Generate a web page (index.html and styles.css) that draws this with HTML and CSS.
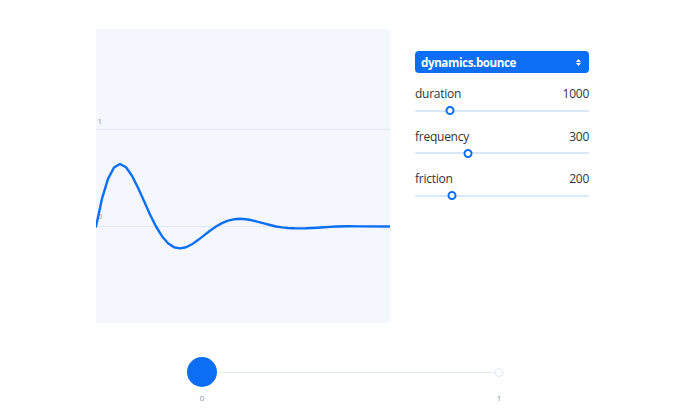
FILE: index.html
```html
<!DOCTYPE html>
<html>
<head>
<meta charset="utf-8">
<link rel="stylesheet" href="styles.css">
</head>
<body>
<div class="stage">
  <div class="main">
    <div class="chart">
      <svg class="plot" width="294" height="294" viewBox="0 0 294 294">
        <line x1="0" y1="100.5" x2="294" y2="100.5" class="grid"/>
        <line x1="0" y1="197.5" x2="294" y2="197.5" class="grid"/>
        <text x="1.5" y="94.5" class="axis">1</text>
        <text x="1.5" y="190" class="axis">0</text>
        <polyline class="curve" points="0,197.5 6,169.7 12,149.9 18,138.5 24,135.0 30,138.3 36,146.8 42,158.7 48,172.1 54,185.5 60,197.5 66,207.2 72,214.2 78,218.2 84,219.4 90,218.2 96,215.2 102,211.1 108,206.4 114,201.7 120,197.5 126,194.1 132,191.7 138,190.3 144,189.8 150,190.3 156,191.3 162,192.8 168,194.4 174,196.0 180,197.5 186,198.4 192,199.0 198,199.3 204,199.4 210,199.3 216,199.0 222,198.7 228,198.3 234,197.9 240,197.5 252,197.3 264,197.4 294,197.5"/>
      </svg>
    </div>
    <div class="panel">
      <div class="select">
        <span class="select-text">dynamics.bounce</span>
        <svg class="select-arrows" width="5" height="7" viewBox="0 0 5 7">
          <polygon points="0,3 2.5,0 5,3" fill="#fff"/>
          <polygon points="0,4 2.5,7 5,4" fill="#fff"/>
        </svg>
      </div>
      <div class="controls">
        <div class="control">
          <div class="control-head"><span>duration</span><span>1000</span></div>
          <div class="slider"><div class="track"></div><div class="thumb" style="left: 20.1%"></div></div>
        </div>
        <div class="control">
          <div class="control-head"><span>frequency</span><span>300</span></div>
          <div class="slider"><div class="track"></div><div class="thumb" style="left: 30.6%"></div></div>
        </div>
        <div class="control">
          <div class="control-head"><span>friction</span><span>200</span></div>
          <div class="slider"><div class="track"></div><div class="thumb" style="left: 21.4%"></div></div>
        </div>
      </div>
    </div>
  </div>
  <div class="timeline">
    <div class="tl-bar">
      <div class="tl-line"></div>
      <div class="tl-knob"></div>
      <div class="tl-end"></div>
    </div>
    <div class="tl-labels"><span class="tl-label">0</span><span class="tl-label">1</span></div>
  </div>
</div>
</body>
</html>
```

FILE: styles.css
```css
html, body {
  margin: 0;
  padding: 0;
  background: #ffffff;
}
body {
  font-family: "Open Sans", "Noto Sans", sans-serif;
  color: #2f343c;
}
.stage {
  width: 700px;
  height: 420px;
  padding-top: 29px;
  box-sizing: border-box;
}
.main {
  display: flex;
  align-items: flex-start;
  gap: 25px;
  padding-left: 96px;
}
.chart {
  width: 294px;
  height: 294px;
  background: #f4f8fe;
  flex: none;
}
.plot {
  display: block;
}
.grid {
  stroke: #dfe9f6;
  stroke-width: 1;
}
.axis {
  font-family: "Open Sans", sans-serif;
  font-size: 8px;
  fill: #8a94a3;
}
.curve {
  fill: none;
  stroke: #0b6ef5;
  stroke-width: 2.4;
  stroke-linejoin: round;
  stroke-linecap: round;
}
.panel {
  width: 174px;
  padding-top: 22px;
  flex: none;
}
.select {
  height: 22px;
  background: #0b6ef5;
  border-radius: 4px;
  display: flex;
  align-items: center;
  justify-content: space-between;
  padding: 0 8px 0 6px;
}
.select-text {
  color: #ffffff;
  font-weight: 700;
  font-size: 11.6px;
  letter-spacing: -0.4px;
}
.select-arrows {
  display: block;
}
.controls {
  margin-top: 13px;
  display: flex;
  flex-direction: column;
  gap: 8.5px;
}
.control-head {
  display: flex;
  justify-content: space-between;
  font-size: 12px;
  letter-spacing: -0.25px;
  line-height: 16px;
}
.slider {
  position: relative;
  height: 18px;
}
.track {
  position: absolute;
  left: 0;
  right: 0;
  top: 7.5px;
  height: 2px;
  background: #d9e7fa;
  border-radius: 1px;
}
.thumb {
  position: absolute;
  top: 4px;
  width: 9px;
  height: 9px;
  box-sizing: border-box;
  border: 2px solid #0b6ef5;
  border-radius: 50%;
  background: #ffffff;
  transform: translateX(-50%);
}
.timeline {
  margin-top: 34px;
  margin-left: 202px;
  width: 297px;
}
.tl-bar {
  position: relative;
  height: 30px;
}
.tl-line {
  position: absolute;
  left: 0;
  right: 0;
  top: 14.5px;
  height: 1.5px;
  background: #e2edfa;
}
.tl-knob {
  position: absolute;
  left: 0;
  top: 0;
  width: 30px;
  height: 30px;
  border-radius: 50%;
  background: #0b6ef5;
  transform: translateX(-50%);
}
.tl-end {
  position: absolute;
  right: 0;
  top: 10.5px;
  width: 9px;
  height: 9px;
  box-sizing: border-box;
  border: 1.5px solid #dce8f8;
  border-radius: 50%;
  background: #ffffff;
  transform: translateX(50%);
}
.tl-labels {
  display: flex;
  justify-content: space-between;
  margin-top: 6px;
  font-size: 8px;
  line-height: 10px;
  color: #8a94a3;
}
.tl-label {
  display: inline-block;
  width: 10px;
  text-align: center;
  margin: 0 -5px;
}
```
